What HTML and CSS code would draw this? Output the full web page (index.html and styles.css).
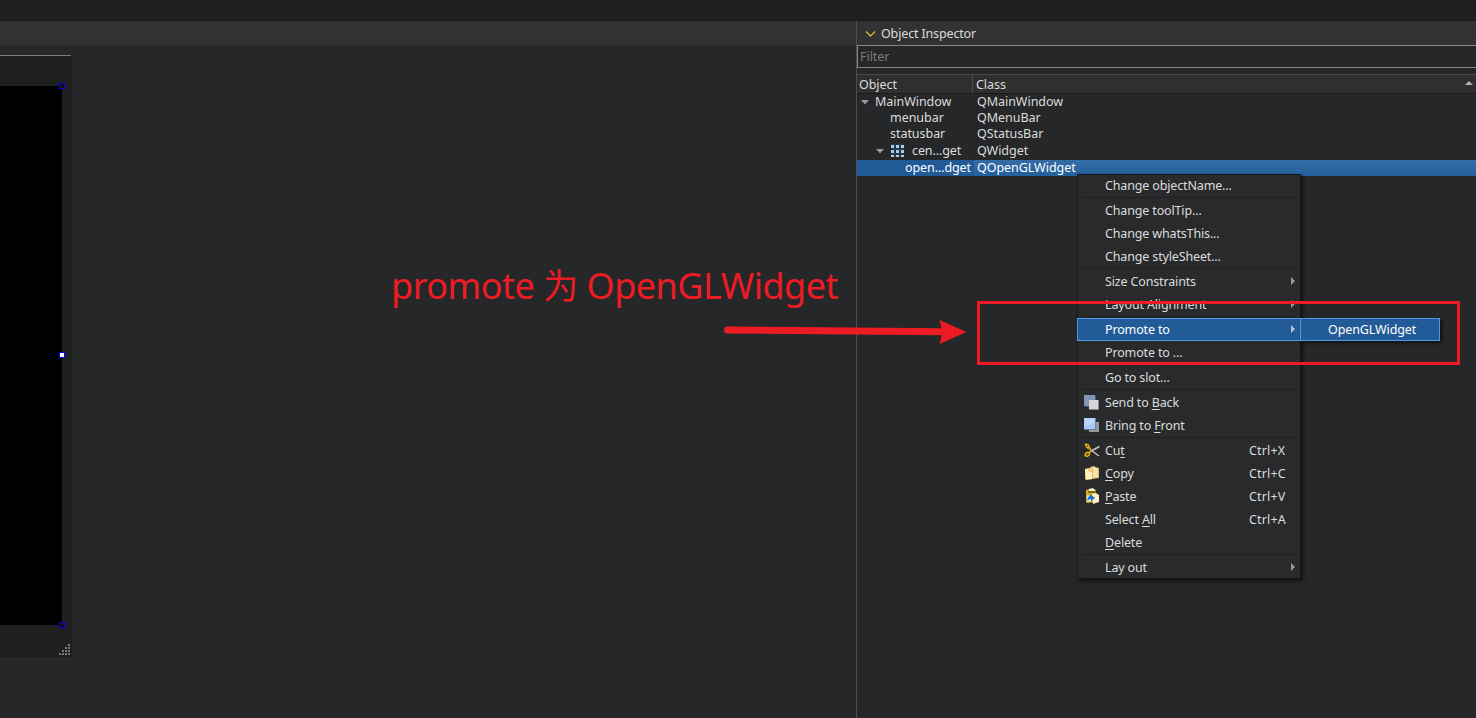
FILE: index.html
```html
<!DOCTYPE html>
<html lang="en">
<head>
<meta charset="utf-8">
<title>Object Inspector</title>
<link rel="stylesheet" href="styles.css">
</head>
<body>
<div class="app">
  <div class="topbar"></div>
  <div class="main">
    <section class="workspace">
      <div class="toolbar"></div>
      <div class="form">
        <div class="canvas">
          <i class="handle handle-top"></i>
          <i class="handle handle-mid"></i>
          <i class="handle handle-bottom"></i>
        </div>
        <svg class="grip" width="12" height="12" viewBox="0 0 12 12" fill="#777"><path d="M9 0h2v2h-2zM6 3h2v2h-2zM9 3h2v2h-2zM3 6h2v2h-2zM6 6h2v2h-2zM9 6h2v2h-2zM0 9h2v2h-2zM3 9h2v2h-2zM6 9h2v2h-2zM9 9h2v2h-2z"/></svg>
      </div>
    </section>
    <aside class="dock">
      <header class="dock-title">
        <svg width="11" height="8" viewBox="0 0 11 8"><path d="M1 1.5l4.5 4.5L10 1.5" fill="none" stroke="#d9b634" stroke-width="1.3"/></svg>
        <span>Object Inspector</span>
      </header>
      <div class="filter">Filter</div>
      <div class="columns"><span class="col-object">Object</span><span class="col-class">Class</span>
        <svg width="8" height="4" viewBox="0 0 8 4"><path d="M0 4l4-4 4 4z" fill="#b4b4b4"/></svg>
      </div>
      <div class="tree">
        <div class="row"><span class="name level0"><svg class="open" width="8" height="5" viewBox="0 0 8 5"><path d="M0 0h8L4 4.5z" fill="#999"/></svg>MainWindow</span><span>QMainWindow</span></div>
        <div class="row"><span class="name level1">menubar</span><span>QMenuBar</span></div>
        <div class="row"><span class="name level1">statusbar</span><span>QStatusBar</span></div>
        <div class="row tall"><span class="name level2"><svg class="open" width="8" height="5" viewBox="0 0 8 5"><path d="M0 0h8L4 4.5z" fill="#999"/></svg><svg class="grid" width="14" height="14" viewBox="0 0 14 14"><path d="M0 0h13v13H0z" fill="#20394d"/><path d="M0 1h3v3H0zM5 1h3v3H5zM10 1h3v3h-3zM0 6h3v3H0zM5 6h3v3H5zM10 6h3v3h-3zM0 11h3v2H0zM5 11h3v2H5zM10 11h3v2h-3z" fill="#b5cbdc"/></svg>cen...get</span><span>QWidget</span></div>
        <div class="row selected"><span class="name level3">open...dget</span><span class="value">QOpenGLWidget</span></div>
      </div>
    </aside>
  </div>
</div>

<nav class="menu">
  <div class="item"><span>Change objectName...</span></div>
  <hr>
  <div class="item"><span>Change toolTip...</span></div>
  <div class="item"><span>Change whatsThis...</span></div>
  <div class="item"><span>Change styleSheet...</span></div>
  <hr>
  <div class="item"><span>Size Constraints</span><i class="arrow"></i></div>
  <div class="item"><span>Layout Alignment</span><i class="arrow"></i></div>
  <hr>
  <div class="item active"><span>Promote to</span><i class="arrow"></i></div>
  <div class="item"><span>Promote to ...</span></div>
  <hr>
  <div class="item"><span>Go to slot...</span></div>
  <hr>
  <div class="item"><svg class="icon" viewBox="0 0 16 16"><path d="M0 1h11v11H0z" fill="#8294b5"/><path d="M11 2h1v10h-7v1h-4v-1h10z" fill="#4a566c"/><path d="M5 6h10v10H5z" fill="#888"/><path d="M5 6h9v9H5z" fill="#d7d7d7"/></svg><span>Send to <u>B</u>ack</span></div>
  <div class="item"><svg class="icon" viewBox="0 0 16 16"><path d="M5 5h10v10H5z" fill="#989898"/><path d="M0 1h12v12H0z" fill="#647ead"/><path d="M0 1h11v11H0z" fill="#a6c7f7"/><path d="M1 2h9v4L1 9z" fill="#bdd7fd"/></svg><span>Bring to <u>F</u>ront</span></div>
  <hr>
  <div class="item"><svg class="icon" viewBox="0 0 16 16"><path d="M4.5 5l3 3.5L15 14M4 11.5l4-3L15.500 4.500" fill="none" stroke="#c4c1b9" stroke-width="1.5"/><path d="M1.500 2.200l2.500.3 1.500 3-1.500.7-2-2zM1 13.500c0-3 2.500-4 4.500-2.500.5 2-2 4.500-4.500 2.500z" fill="#604500" stroke="#edbd18" stroke-width="1.300"/><path d="M5 6l2 2.500-2 2" fill="none" stroke="#c69310" stroke-width="1.500"/></svg><span>Cu<u>t</u></span><kbd>Ctrl+X</kbd></div>
  <div class="item"><svg class="icon" viewBox="0 0 16 16"><path d="M6 2l4-1 1 1 4 1v10l-7 1z" fill="#d7bd76"/><path d="M7 3l4-1 3 2v8l-6 1z" fill="#f4e2a8"/><path d="M1 4l4-1 4 1v10l-7 1-1-1z" fill="#dfbd68"/><path d="M1 4l4-.5 3 1.5v9l-6 .5z" fill="#fff0bd"/><path d="M5 3v3h3" fill="none" stroke="#d4ab50"/></svg><span><u>C</u>opy</span><kbd>Ctrl+C</kbd></div>
  <div class="item"><svg class="icon" viewBox="0 0 16 16"><path d="M2 2l3-1 7 1v12l-9 1-1-1z" fill="#dcae20"/><path d="M5 1l4-1 2 2v2H5z" fill="#f0f0df"/><path d="M4 3h8v2H4z" fill="#876700"/><path d="M8 6l4-1 3 2v7l-6 2z" fill="#fff1c5"/><path d="M3 7l5 1v5l-5 1z" fill="#c4e5ff"/><path d="M3 13c1-4 2-5 3-5V6l5 4-4 3v-2c-2 0-3 1-4 2z" fill="#216ed1"/></svg><span><u>P</u>aste</span><kbd>Ctrl+V</kbd></div>
  <div class="item"><span>Select <u>A</u>ll</span><kbd>Ctrl+A</kbd></div>
  <div class="item"><span><u>D</u>elete</span></div>
  <hr>
  <div class="item"><span>Lay out</span><i class="arrow"></i></div>
</nav>
<nav class="submenu">OpenGLWidget</nav>

<div class="note">promote <span class="han">为</span> OpenGLWidget</div>
<svg class="pointer" width="250" height="34" viewBox="0 0 250 34"><path d="M7.500 14L225 15.700" stroke="#ed1c24" stroke-width="7" stroke-linecap="round"/><path d="M219.500 4l27 12-27 12 3-12z" fill="#ed1c24"/></svg>
<div class="highlight"></div>
</body>
</html>
```
FILE: styles.css
```css
* { box-sizing: border-box; }
body {
  margin: 0;
  width: 1476px;
  height: 718px;
  overflow: hidden;
  position: relative;
  background: #262729;
  color: #dcdcdc;
  font: 12.5px/16px "Noto Sans", "Noto Sans CJK SC", sans-serif;
  white-space: nowrap;
}
svg { display: block; flex: none; }

.app { display: flex; flex-direction: column; height: 718px; }
.topbar { height: 21px; background: #1f1f1f; border-bottom: 1px solid #191919; }
.main { display: flex; flex: 1; }

.workspace { width: 856px; }
.toolbar { height: 24px; background: #323232; margin-bottom: 10px; }
.form {
  position: relative;
  width: 72px;
  height: 602px;
  padding-top: 31px;
  background: linear-gradient(#7d7d7d, #7d7d7d) 0 0 / 71px 1px no-repeat #1f1f1f;
}
.canvas { position: relative; width: 62px; height: 539px; background: #000; }
.handle { position: absolute; left: 59px; width: 6px; height: 6px; border: 1px solid #0000f0; background: #111; }
.handle-top { top: -3px; }
.handle-mid { top: 266px; background: #fff; }
.handle-bottom { bottom: -3px; }
.grip { position: absolute; left: 59px; bottom: 1px; }

.dock { flex: 1; border-left: 1px solid #4d4d4e; letter-spacing: -0.04px; }
.dock-title { display: flex; align-items: center; gap: 5px; height: 24px; padding: 1px 0 0 8px; background: #323232; letter-spacing: -0.15px; }
.filter { height: 23px; padding: 3px 2px; border: 1px solid #868686; border-right: 0; color: #7b7b7b; line-height: 15px; }
.columns {
  position: relative;
  display: flex;
  height: 20px;
  margin-top: 6px;
  border-top: 1px solid #4a4a4b;
  border-bottom: 1px solid #1a1a1a;
  background: #2f2f30;
  line-height: 20px;
}
.columns svg { position: absolute; right: 3px; top: 6px; }
.col-object { width: 116px; height: 18px; padding-left: 2px; border-right: 1px solid #4a4a4b; }
.col-class { height: 18px; padding-left: 3px; }
.row { display: flex; height: 16px; }
.row.tall { height: 18px; line-height: 18px; }
.name { display: flex; align-items: center; width: 120px; }
.level0 { padding-left: 4px; }
.level0 .open { margin-right: 6px; }
.level1 { padding-left: 33px; }
.level2 { padding-left: 19px; letter-spacing: -0.1px; }
.level2 .open { margin-right: 7px; }
.grid { margin-right: 7px; }
.level3 { padding-left: 48px; letter-spacing: -0.1px; }
.selected { background: #215a95; color: #fff; }
.selected .name { width: 117px; }
.selected .value { flex: 1; padding-left: 3px; background: linear-gradient(#356da6, #245f9e); }

.menu {
  position: absolute;
  left: 1077px;
  top: 174px;
  width: 224px;
  height: 405px;
  background: #292a2c;
  box-shadow: inset 0 0 0 1px #171717, 2px 2px 3px #101010;
  letter-spacing: -0.15px;
}
.item { position: relative; display: flex; align-items: center; height: 23px; padding: 0 14px 0 28px; }
.item span { flex: 1; }
.item u { text-decoration-thickness: 1px; text-underline-offset: 2px; }
.item kbd { width: 38px; font: inherit; letter-spacing: 0.15px; }
.icon { position: absolute; left: 7px; top: 3px; width: 16px; height: 16px; }
.arrow { position: absolute; left: 214px; top: 7px; border: 4px solid transparent; border-left-color: #9a9a9a; border-right: 0; }
.menu hr { height: 2px; margin: 0 5px; border: 0; border-top: 1px solid #1e1f20; }
.active { border: 1px solid #4b9bea; background: #235b98; color: #fff; padding-left: 27px; }
.active .arrow { left: 213px; top: 6px; border-left-color: #b5c5d8; }
.submenu {
  position: absolute;
  left: 1300px;
  top: 318px;
  width: 140px;
  height: 23px;
  padding-left: 27px;
  border: 1px solid #4b9bea;
  background: #235b98;
  box-shadow: 2px 2px 3px #101010;
  color: #fff;
  line-height: 21px;
  letter-spacing: -0.1px;
}

.note { position: absolute; left: 391px; top: 259px; color: #ed1c24; font-size: 36px; line-height: 50px; letter-spacing: -0.5px; }
.han { font-family: "Noto Sans CJK SC", sans-serif; font-weight: 400; font-size: 35px; }
.pointer { position: absolute; left: 720px; top: 316px; }
.highlight { position: absolute; left: 977px; top: 301px; width: 483px; height: 64px; border: 3px solid #ed1c24; }
```
